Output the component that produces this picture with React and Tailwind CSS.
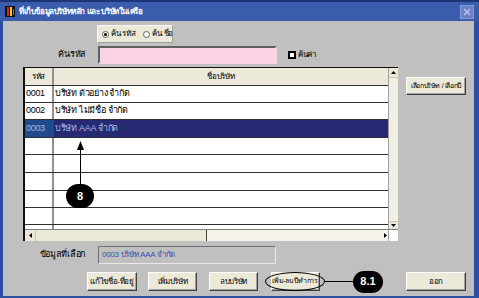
import React from 'react';

// --- DATA ---
const rows = [
  { code: '0001', name: 'บริษัท ตัวอย่าง จำกัด', h: 'h-[17px]' },
  { code: '0002', name: 'บริษัท ไม่มีชื่อ จำกัด', h: 'h-[17px]' },
  { code: '0003', name: 'บริษัท AAA จำกัด', h: 'h-[18px]', selected: true },
  { code: '', name: '', h: 'h-[17px]' },
  { code: '', name: '', h: 'h-[18px]' },
  { code: '', name: '', h: 'h-[18px]' },
  { code: '', name: '', h: 'h-[17px]' },
  { code: '', name: '', h: 'h-[17px]' },
];

// size classes added per button so they never clash
const btn =
  'flex items-center justify-center whitespace-nowrap overflow-hidden bg-[#ece9d8] border border-t-white border-l-white border-r-[#404040] border-b-[#404040] shadow-[inset_-1px_-1px_0_#a0a0a0] text-black';

const Radio = ({ checked }) => (
  <span className="w-[7px] h-[7px] shrink-0 rounded-full bg-white border border-[#606060] flex items-center justify-center">
    {checked && <span className="w-[3px] h-[3px] rounded-full bg-black" />}
  </span>
);

const App = () => {
  return (
    <div className="w-[479px] h-[298px] flex flex-col bg-[#2d4f9f] font-['Tahoma','Liberation_Sans','Noto_Sans',sans-serif] overflow-hidden">
      {/* TITLE BAR */}
      <div className="h-[21px] flex items-center bg-[#3a5cac] border-t-2 border-[#1c3575] pl-[5px] pr-[5px]">
        <svg width="10" height="11" viewBox="0 0 10 11" className="mr-[4px]">
          <rect x="0" y="0" width="10" height="11" fill="#111" />
          <rect x="2" y="1" width="2" height="9" fill="#e02020" />
          <rect x="5" y="1" width="2" height="9" fill="#f0d020" />
          <rect x="8" y="3" width="1" height="6" fill="#30a040" />
        </svg>
        <span className="text-white font-bold text-[8px] leading-none tracking-[-0.4px] whitespace-nowrap">
          ที่เก็บข้อมูลบริษัทหลัก และ บริษัทในเครือ
        </span>
        <div className="ml-auto w-[14px] h-[14px] bg-[#6b80c8] border border-[#8a9bd8] flex items-center justify-center">
          <svg width="8" height="8" viewBox="0 0 8 8">
            <path d="M1 1 L7 7 M7 1 L1 7" stroke="#b4bfee" strokeWidth="1.5" />
          </svg>
        </div>
      </div>

      {/* BODY */}
      <div className="relative flex-1 ml-[3px] mr-[5px] mb-[2px] bg-[#c0c0c0] flex flex-col text-[9px] tracking-[-0.3px] whitespace-nowrap">
        {/* Search mode */}
        <div className="mt-[4px] ml-[94px] w-[76px] h-[18px] bg-[#ece9d8] border border-[#f8f8f8] border-r-[#a0a0a0] border-b-[#a0a0a0] flex items-center gap-[2px] pl-[4px] text-[8px] text-black">
          <Radio checked />
          <span className="mr-[6px]">ค้น รหัส</span>
          <Radio />
          <span>ค้น ชื่อ</span>
        </div>

        {/* Search input */}
        <div className="mt-[3px] h-[18px] flex items-center">
          <span className="w-[95px] pr-[13px] text-right text-black">ค้นรหัส</span>
          <div className="w-[179px] h-[18px] bg-[#f9d3e4] border-2 border-t-[#606060] border-l-[#606060] border-r-[#f9d3e4] border-b-[#f9d3e4]" />
          <span className="ml-[11px] w-[8px] h-[8px] bg-white border-2 border-black" />
          <span className="ml-[2px] text-[8px] text-black">ค้นค่า</span>
        </div>

        {/* Grid + side button */}
        <div className="mt-[3px] flex items-start pl-[20px]">
          <div className="w-[375px] h-[174px] flex flex-col border-l-2 border-t border-[#101010]">
            <div className="flex flex-1 min-h-0">
              <div className="flex-1 flex flex-col bg-white overflow-hidden">
                <div className="h-[18px] shrink-0 flex bg-[#ece9d8] border-b border-[#303030] text-[8px] text-black">
                  <span className="w-[29px] flex items-center justify-center border-r-2 border-[#909090]">รหัส</span>
                  <span className="flex-1 flex items-center justify-center">ชื่อบริษัท</span>
                </div>
                {rows.map((r, i) => (
                  <div
                    key={i}
                    className={`${r.h} shrink-0 flex border-b border-[#303030] ${r.selected ? 'bg-[#262a72] text-[#a8b8ec]' : 'text-black'}`}
                  >
                    <span
                      className={`w-[29px] flex items-center pl-[1px] border-r-2 ${r.selected ? 'bg-[#1f4a8c] border-[#1f4a8c]' : 'border-[#909090]'}`}
                    >
                      {r.code}
                    </span>
                    <span className="flex-1 flex items-center pl-[1px]">{r.name}</span>
                  </div>
                ))}
                <div className="flex-1 flex">
                  <span className="w-[29px] border-r-2 border-[#909090]" />
                </div>
              </div>
              {/* vertical scrollbar */}
              <div className="w-[10px] flex flex-col bg-[#ece9d8] border-l border-[#a0a0a0]">
                <div className="h-[10px] flex items-center justify-center border-b border-[#c8c4b0]">
                  <svg width="5" height="3" viewBox="0 0 5 3"><path d="M0 3 L2.5 0 L5 3 Z" fill="#000" /></svg>
                </div>
                <div className="flex-1 bg-[#f1efe4]" />
                <div className="h-[8px] flex items-center justify-center border-t border-[#c8c4b0]">
                  <svg width="5" height="3" viewBox="0 0 5 3"><path d="M0 0 L2.5 3 L5 0 Z" fill="#000" /></svg>
                </div>
              </div>
            </div>
            {/* horizontal scrollbar */}
            <div className="h-[12px] flex border-t border-[#808080]">
              <div className="w-[11px] flex items-center justify-center bg-[#ece9d8] border-r border-[#c8c4b0]">
                <svg width="3" height="5" viewBox="0 0 3 5"><path d="M3 0 L0 2.5 L3 5 Z" fill="#000" /></svg>
              </div>
              <div className="w-[171px] bg-[#ece9d8] border-r border-[#404040]" />
              <div className="flex-1 bg-[#f4f2ea]" />
              <div className="w-[5px] flex items-center justify-center bg-[#f4f2ea]">
                <svg width="3" height="5" viewBox="0 0 3 5"><path d="M0 0 L3 2.5 L0 5 Z" fill="#000" /></svg>
              </div>
              <div className="w-[10px] bg-white border-l border-[#a0a0a0]" />
            </div>
          </div>
          <button className={`${btn} ml-[8px] mt-[10px] w-[60px] h-[18px] text-[7px] tracking-[-0.4px]`}>เลือกบริษัท / เลือกปี</button>
        </div>

        {/* Selected value */}
        <div className="mt-[5px] h-[18px] flex items-center">
          <span className="w-[95px] pr-[13px] text-right text-black">ข้อมูลที่เลือก</span>
          <div className="w-[178px] h-[18px] flex items-center pl-[3px] border border-t-[#707070] border-l-[#707070] border-r-[#e8e8e8] border-b-[#e8e8e8] text-[8px] text-[#3050b0]">
            0003 บริษัท AAA จำกัด
          </div>
        </div>

        {/* Action buttons */}
        <div className="mt-[8px] h-[19px] flex items-center pl-[84px]">
          <button className={`${btn} w-[50px] h-[19px] text-[8px] tracking-[-0.3px]`}>แก้ไขชื่อ-ที่อยู่</button>
          <button className={`${btn} ml-[11px] w-[49px] h-[19px] text-[8px] tracking-[-0.3px]`}>เพิ่มบริษัท</button>
          <button className={`${btn} ml-[12px] w-[49px] h-[19px] text-[8px] tracking-[-0.3px]`}>ลบบริษัท</button>
          <div className="relative ml-[7px] w-[60px] h-[19px] flex justify-center">
            <button className={`${btn} w-[49px] h-[19px] text-[7px] tracking-[-0.3px]`}>เพิ่ม-ลบ ปีทำการ</button>
            <span className="absolute inset-0 rounded-[50%] border border-black" />
          </div>
          <span className="w-[28px] h-px bg-black" />
          <span className="w-[30px] h-[22px] shrink-0 rounded-full bg-black text-white font-bold text-[11px] tracking-normal flex items-center justify-center font-['Liberation_Sans',sans-serif]">
            8.1
          </span>
          <button className={`${btn} ml-[23px] w-[60px] h-[19px] text-[8px]`}>ออก</button>
        </div>

        {/* Annotation 8 */}
        <div className="absolute left-[74px] top-[120px] w-[7px] flex flex-col items-center">
          <svg width="7" height="9" viewBox="0 0 7 9"><path d="M3.5 0 L7 9 L0 9 Z" fill="#000" /></svg>
          <span className="w-px h-[35px] bg-black" />
        </div>
        <span className="absolute left-[63px] top-[163px] w-[28px] h-[24px] rounded-full bg-black text-white font-bold text-[11px] tracking-normal flex items-center justify-center font-['Liberation_Sans',sans-serif]">
          8
        </span>
      </div>
    </div>
  );
};

export default App;
